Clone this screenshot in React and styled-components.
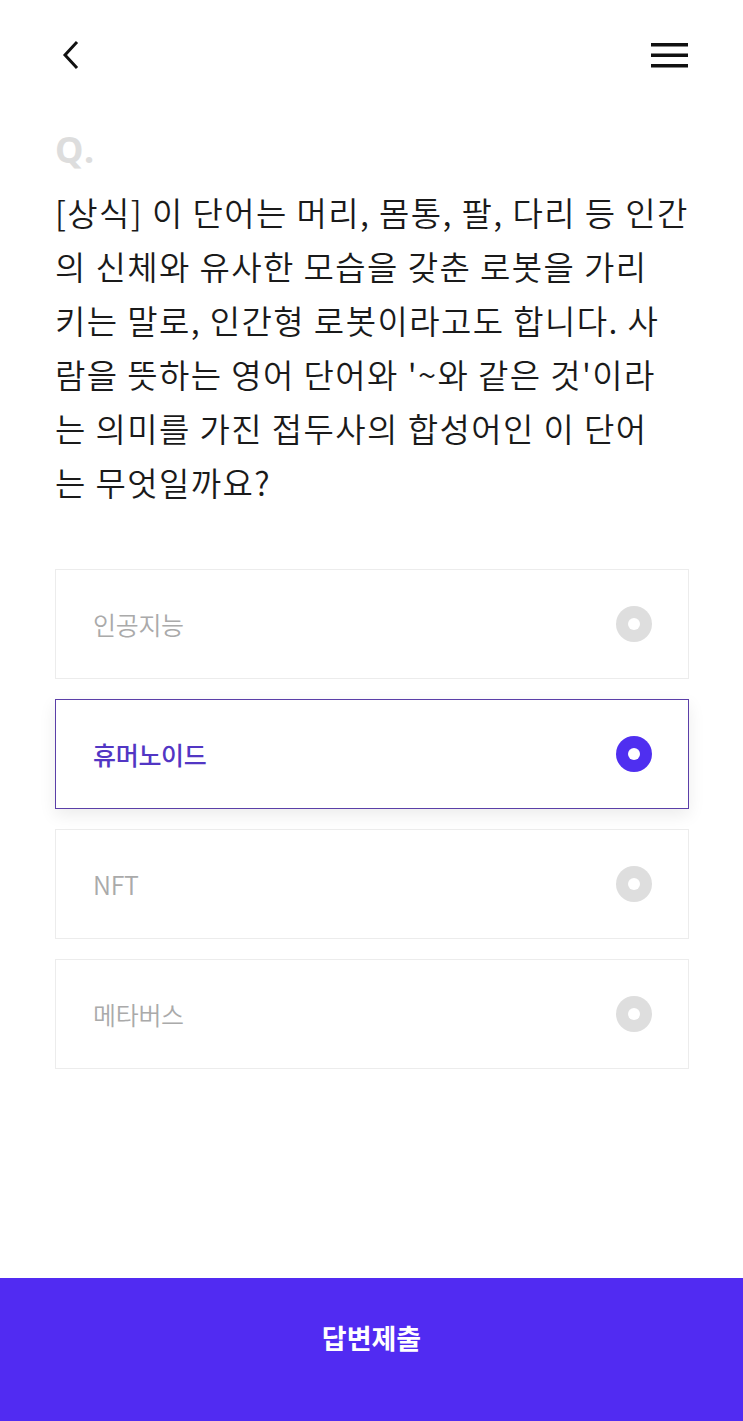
import React, { useState } from "react";
import styled, { createGlobalStyle } from "styled-components";

const Global = createGlobalStyle`
  html, body { margin: 0; padding: 0; background: #fff; }
  body { font-family: "Noto Sans CJK KR", "Noto Sans", sans-serif; }
  * { box-sizing: border-box; }
`;

const Page = styled.div`
  width: 743px;
  height: 1421px;
  display: flex;
  flex-direction: column;
  background: #fff;
`;

const Header = styled.header`
  height: 110px;
  display: flex;
  align-items: center;
  justify-content: space-between;
  padding: 0 54px 0 60px;
`;

const IconButton = styled.button`
  border: 0;
  background: none;
  padding: 0;
  display: flex;
  align-items: center;
  justify-content: center;
  cursor: pointer;
`;

const Content = styled.main`
  flex: 1;
  padding: 20px 54px 0 55px;
`;

const QMark = styled.div`
  font-family: "Noto Sans", "Open Sans", sans-serif;
  font-weight: 700;
  font-size: 36px;
  line-height: 40px;
  color: #dddddd;
  letter-spacing: 2px;
`;

const Question = styled.p`
  margin: 15px 0 0;
  font-size: 33px;
  line-height: 54px;
  font-weight: 350;
  color: #1a1a1a;
  letter-spacing: 1.4px;
  white-space: nowrap;
`;

const Line = styled.span`
  display: block;
`;

const Options = styled.ul`
  list-style: none;
  margin: 60px 0 0;
  padding: 0;
  display: flex;
  flex-direction: column;
  gap: 20px;
`;

const Option = styled.li`
  height: 110px;
  border: ${(p) => (p.$selected ? "1.5px solid #5b3fa8" : "1px solid #ececec")};
  box-shadow: ${(p) => (p.$selected ? "0 6px 16px rgba(0,0,0,0.08)" : "none")};
  display: flex;
  align-items: center;
  justify-content: space-between;
  padding: 0 36px 0 37px;
  cursor: pointer;
`;

const OptionText = styled.span`
  font-size: 25px;
  font-weight: ${(p) => (p.$selected ? 500 : 350)};
  color: ${(p) => (p.$selected ? "#5236c4" : "#aaaaaa")};
  letter-spacing: -0.3px;
`;

const Radio = styled.span`
  width: 36px;
  height: 36px;
  border-radius: 50%;
  background: ${(p) => (p.$selected ? "#4f2ff0" : "#dedede")};
  display: flex;
  align-items: center;
  justify-content: center;
  &::after {
    content: "";
    width: 12px;
    height: 12px;
    border-radius: 50%;
    background: #fff;
  }
`;

const Submit = styled.button`
  height: 143px;
  width: 100%;
  border: 0;
  background: #512bf2;
  color: #fff;
  font-family: "Noto Sans CJK KR", sans-serif;
  font-size: 27px;
  font-weight: 700;
  padding-bottom: 25px;
  cursor: pointer;
`;

const lines = [
  "[상식] 이 단어는 머리, 몸통, 팔, 다리 등 인간",
  "의 신체와 유사한 모습을 갖춘 로봇을 가리",
  "키는 말로, 인간형 로봇이라고도 합니다. 사",
  "람을 뜻하는 영어 단어와 '~와 같은 것'이라",
  "는 의미를 가진 접두사의 합성어인 이 단어",
  "는 무엇일까요?",
];

const choices = ["인공지능", "휴머노이드", "NFT", "메타버스"];

export default function App() {
  const [selected, setSelected] = useState(1);
  return (
    <Page>
      <Global />
      <Header>
        <IconButton aria-label="뒤로">
          <svg width="20" height="30" viewBox="0 0 20 30">
            <path d="M16 3 L5 15 L16 27" fill="none" stroke="#111" strokeWidth="3" strokeLinecap="square" />
          </svg>
        </IconButton>
        <IconButton aria-label="메뉴">
          <svg width="38" height="28" viewBox="0 0 38 28">
            <rect x="0" y="2" width="37" height="3.5" fill="#111" />
            <rect x="0" y="12.5" width="37" height="3.5" fill="#111" />
            <rect x="0" y="23" width="37" height="3.5" fill="#111" />
          </svg>
        </IconButton>
      </Header>
      <Content>
        <QMark>Q.</QMark>
        <Question>
          {lines.map((l) => (
            <Line key={l}>{l}</Line>
          ))}
        </Question>
        <Options>
          {choices.map((c, i) => (
            <Option key={c} $selected={i === selected} onClick={() => setSelected(i)}>
              <OptionText $selected={i === selected}>{c}</OptionText>
              <Radio $selected={i === selected} />
            </Option>
          ))}
        </Options>
      </Content>
      <Submit>답변제출</Submit>
    </Page>
  );
}
